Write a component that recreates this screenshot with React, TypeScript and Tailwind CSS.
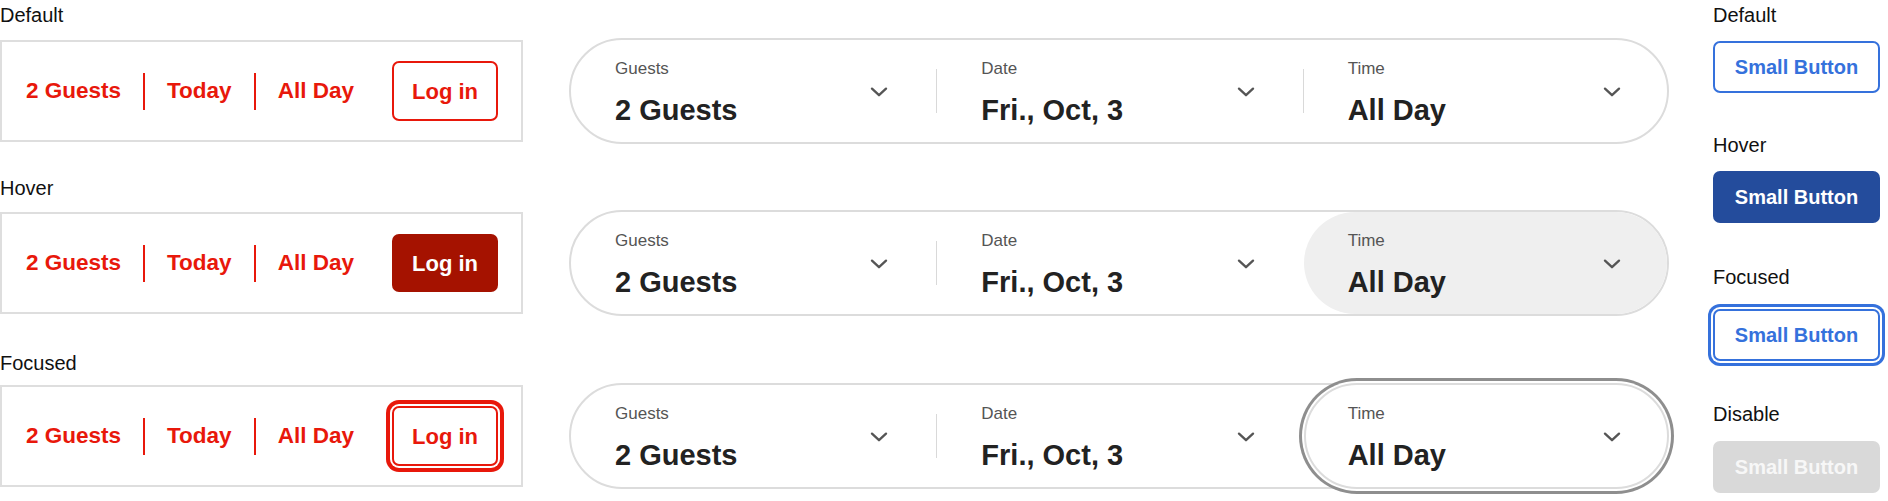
import React from "react";

const RED = "text-[#e8180b]";

function Chevron() {
  return (
    <svg width="18" height="10" viewBox="0 0 18 10" fill="none">
      <path d="M2 1.6L9 8.2L16 1.6" stroke="#555" strokeWidth="2.3" strokeLinecap="round" strokeLinejoin="round" />
    </svg>
  );
}

type SegVariant = "normal" | "hover" | "focus";

function Segment({ label, value, variant = "normal", last = false }: { label: string; value: string; variant?: SegVariant; last?: boolean }) {
  let cls = "flex-1 self-stretch flex items-start justify-between ";
  if (variant === "hover") cls += "bg-[#efefef] rounded-full pl-[44px] pr-[46px]";
  else if (variant === "focus")
    cls += "-my-[2px] -mr-[2px] border-2 border-[#dcdcdc] rounded-full bg-white pl-[42px] pr-[46px] shadow-[0_0_0_2px_#fff,0_0_0_5px_#8e8e8e]";
  else cls += last ? "pl-[44px] pr-[46px]" : "pl-[44px] pr-[48px]";
  return (
    <div className={cls}>
      <div className="flex flex-col pt-[19px]">
        <span className="text-[17px] leading-[20px] text-[#555]">{label}</span>
        <span className="mt-[14px] text-[29px] leading-[34px] font-bold text-[#222] whitespace-nowrap">{value}</span>
      </div>
      <div className="mt-[47px] flex">
        <Chevron />
      </div>
    </div>
  );
}

function PillDivider({ hidden = false }: { hidden?: boolean }) {
  return <div className={"w-px h-[44px] shrink-0 " + (hidden ? "bg-transparent" : "bg-[#d9d9d9]")} />;
}

function Pill({ variant }: { variant: SegVariant }) {
  return (
    <div className="ml-[46px] w-[1100px] h-[106px] shrink-0 rounded-full border-2 border-[#dcdcdc] bg-white flex items-center">
      <Segment label="Guests" value="2 Guests" />
      <PillDivider />
      <Segment label="Date" value="Fri., Oct, 3" />
      <PillDivider hidden={variant !== "normal"} />
      <Segment label="Time" value="All Day" variant={variant} last />
    </div>
  );
}

function RedDivider() {
  return <div className="w-[2px] h-[37px] bg-[#e8180b]" />;
}

function LoginBox({ variant }: { variant: SegVariant }) {
  let btn = "ml-auto w-[106px] rounded-[7px] text-[22px] font-bold flex items-center justify-center ";
  if (variant === "hover") btn += "h-[58px] bg-[#a51200] text-white";
  else if (variant === "focus")
    btn += "h-[60px] border-2 border-[#e8180b] bg-white text-[#e8180b] shadow-[0_0_0_2px_#fff,0_0_0_6px_#e8180b]";
  else btn += "h-[60px] border-2 border-[#e8180b] bg-white text-[#e8180b]";
  return (
    <div className="w-[523px] h-[102px] shrink-0 border-2 border-[#dedede] flex items-center pl-[24px] pr-[23px]">
      <div className={"flex items-center gap-[22px] text-[22.5px] font-bold " + RED}>
        <span>2 Guests</span>
        <RedDivider />
        <span>Today</span>
        <RedDivider />
        <span>All Day</span>
      </div>
      <div className={btn}>Log in</div>
    </div>
  );
}

function Label({ children, className = "" }: { children: React.ReactNode; className?: string }) {
  return <div className={"h-[20px] text-[20px] leading-[20px] text-[#111] " + className}>{children}</div>;
}

function SmallButton({ variant, className = "" }: { variant: "default" | "hover" | "focus" | "disabled"; className?: string }) {
  let cls = "w-[167px] h-[52px] rounded-[7px] flex items-center justify-center text-[20px] font-bold ";
  if (variant === "default") cls += "border-2 border-[#3571dc] text-[#3571dc] bg-white";
  else if (variant === "hover") cls += "bg-[#244c9c] text-white";
  else if (variant === "focus")
    cls += "border-2 border-[#3571dc] text-[#3571dc] bg-white shadow-[0_0_0_2px_#fff,0_0_0_5px_#3571dc]";
  else cls += "bg-[#d9d9d9] text-[#f7f7f7]";
  return <div className={cls + " " + className}>Small Button</div>;
}

export default function App() {
  return (
    <div className="w-[1888px] h-[501px] overflow-hidden bg-white flex font-['Liberation_Sans',Arial,sans-serif]">
      <div className="flex flex-col">
        <Label className="mt-[5px]">Default</Label>
        <div className="mt-[13px] flex items-center h-[106px]">
          <LoginBox variant="normal" />
          <Pill variant="normal" />
        </div>
        <Label className="mt-[34px]">Hover</Label>
        <div className="mt-[12px] flex items-center h-[106px]">
          <LoginBox variant="hover" />
          <Pill variant="hover" />
        </div>
        <Label className="mt-[37px]">Focused</Label>
        <div className="mt-[10px] flex items-center h-[106px]">
          <LoginBox variant="focus" />
          <Pill variant="focus" />
        </div>
      </div>
      <div className="ml-[44px] w-[167px] flex flex-col shrink-0">
        <Label className="mt-[5px]">Default</Label>
        <SmallButton variant="default" className="mt-[16px]" />
        <Label className="mt-[42px]">Hover</Label>
        <SmallButton variant="hover" className="mt-[16px]" />
        <Label className="mt-[44px]">Focused</Label>
        <SmallButton variant="focus" className="mt-[22px]" />
        <Label className="mt-[43px]">Disable</Label>
        <SmallButton variant="disabled" className="mt-[17px]" />
      </div>
    </div>
  );
}
